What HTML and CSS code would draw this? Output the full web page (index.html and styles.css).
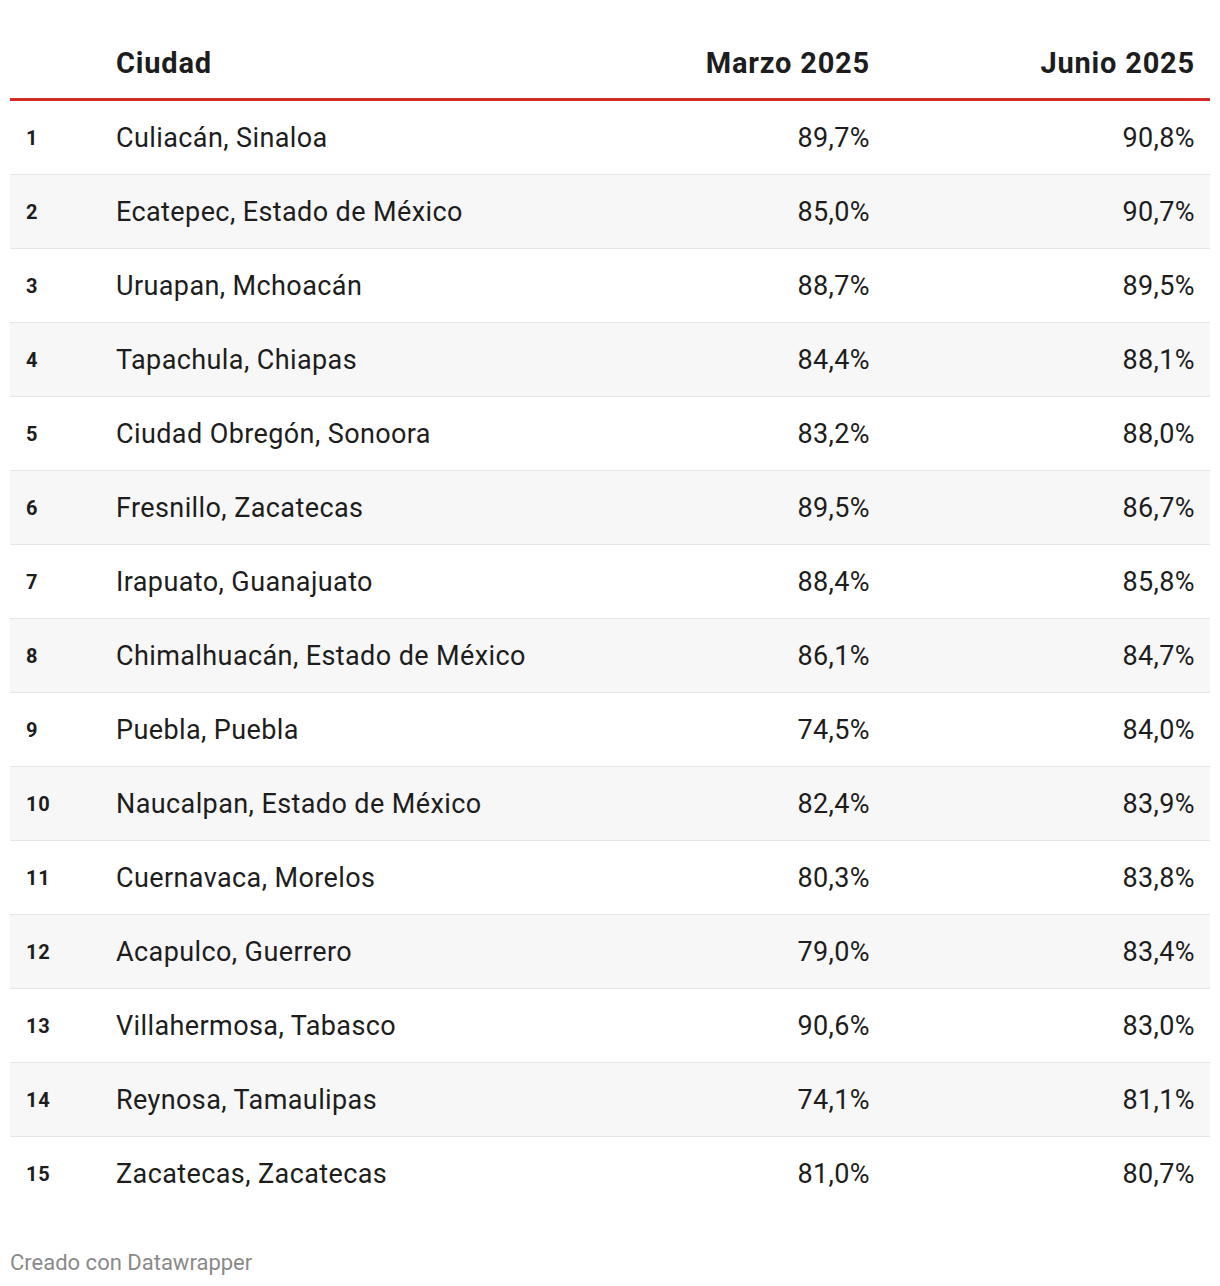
FILE: index.html
```html
<!DOCTYPE html>
<html lang="es">
<head>
<meta charset="utf-8">
<link rel="stylesheet" href="styles.css">
</head>
<body>
<div class="wrap">
  <table class="tbl">
    <thead>
      <tr>
        <th class="c-rank"></th>
        <th class="c-city">Ciudad</th>
        <th class="c-num c-mar">Marzo 2025</th>
        <th class="c-num c-jun">Junio 2025</th>
      </tr>
    </thead>
    <tbody>
      <tr><td class="c-rank">1</td><td class="c-city">Culiacán, Sinaloa</td><td class="c-num c-mar">89,7%</td><td class="c-num c-jun">90,8%</td></tr>
      <tr><td class="c-rank">2</td><td class="c-city">Ecatepec, Estado de México</td><td class="c-num c-mar">85,0%</td><td class="c-num c-jun">90,7%</td></tr>
      <tr><td class="c-rank">3</td><td class="c-city">Uruapan, Mchoacán</td><td class="c-num c-mar">88,7%</td><td class="c-num c-jun">89,5%</td></tr>
      <tr><td class="c-rank">4</td><td class="c-city">Tapachula, Chiapas</td><td class="c-num c-mar">84,4%</td><td class="c-num c-jun">88,1%</td></tr>
      <tr><td class="c-rank">5</td><td class="c-city">Ciudad Obregón, Sonoora</td><td class="c-num c-mar">83,2%</td><td class="c-num c-jun">88,0%</td></tr>
      <tr><td class="c-rank">6</td><td class="c-city">Fresnillo, Zacatecas</td><td class="c-num c-mar">89,5%</td><td class="c-num c-jun">86,7%</td></tr>
      <tr><td class="c-rank">7</td><td class="c-city">Irapuato, Guanajuato</td><td class="c-num c-mar">88,4%</td><td class="c-num c-jun">85,8%</td></tr>
      <tr><td class="c-rank">8</td><td class="c-city">Chimalhuacán, Estado de México</td><td class="c-num c-mar">86,1%</td><td class="c-num c-jun">84,7%</td></tr>
      <tr><td class="c-rank">9</td><td class="c-city">Puebla, Puebla</td><td class="c-num c-mar">74,5%</td><td class="c-num c-jun">84,0%</td></tr>
      <tr><td class="c-rank">10</td><td class="c-city">Naucalpan, Estado de México</td><td class="c-num c-mar">82,4%</td><td class="c-num c-jun">83,9%</td></tr>
      <tr><td class="c-rank">11</td><td class="c-city">Cuernavaca, Morelos</td><td class="c-num c-mar">80,3%</td><td class="c-num c-jun">83,8%</td></tr>
      <tr><td class="c-rank">12</td><td class="c-city">Acapulco, Guerrero</td><td class="c-num c-mar">79,0%</td><td class="c-num c-jun">83,4%</td></tr>
      <tr><td class="c-rank">13</td><td class="c-city">Villahermosa, Tabasco</td><td class="c-num c-mar">90,6%</td><td class="c-num c-jun">83,0%</td></tr>
      <tr><td class="c-rank">14</td><td class="c-city">Reynosa, Tamaulipas</td><td class="c-num c-mar">74,1%</td><td class="c-num c-jun">81,1%</td></tr>
      <tr><td class="c-rank">15</td><td class="c-city">Zacatecas, Zacatecas</td><td class="c-num c-mar">81,0%</td><td class="c-num c-jun">80,7%</td></tr>
    </tbody>
  </table>
  <div class="footer">Creado con Datawrapper</div>
</div>
</body>
</html>
```

FILE: styles.css
```css
html, body {
  margin: 0;
  padding: 0;
  background: #ffffff;
}
body {
  font-family: Roboto, "Liberation Sans", sans-serif;
  color: #1d1d1d;
}
.wrap {
  padding: 0 10px;
}
.tbl {
  width: 1200px;
  border-collapse: collapse;
  table-layout: fixed;
}
.tbl th {
  font-weight: 700;
  font-size: 29px;
  letter-spacing: 0.8px;
  height: 98px;
  padding: 46px 15px 18px 0;
  border-bottom: 3px solid #d52a2a;
  vertical-align: middle;
  box-sizing: border-box;
  line-height: 34px;
}
.tbl td {
  font-size: 27px;
  letter-spacing: 0.4px;
  height: 72px;
  padding: 1px 15px 0 0;
  border-bottom: 1px solid #e6e6e6;
  vertical-align: middle;
  line-height: 30px;
}
.tbl tbody tr:nth-child(even) td {
  background: #f7f7f7;
}
.tbl tbody tr:last-child td {
  border-bottom: none;
}
.c-rank {
  width: 106px;
  text-align: left;
}
.tbl td.c-rank {
  font-weight: 700;
  font-size: 20px;
  letter-spacing: 0.8px;
  padding-left: 16px;
  padding-right: 0;
}
.c-city {
  text-align: left;
  width: auto;
}
.c-num {
  text-align: right;
}
.c-mar {
  width: 340px;
  box-sizing: border-box;
}
.c-jun {
  width: 325px;
  box-sizing: border-box;
}
.footer {
  margin-top: 40px;
  font-size: 22px;
  color: #8a8a8a;
  line-height: 26px;
}
```
